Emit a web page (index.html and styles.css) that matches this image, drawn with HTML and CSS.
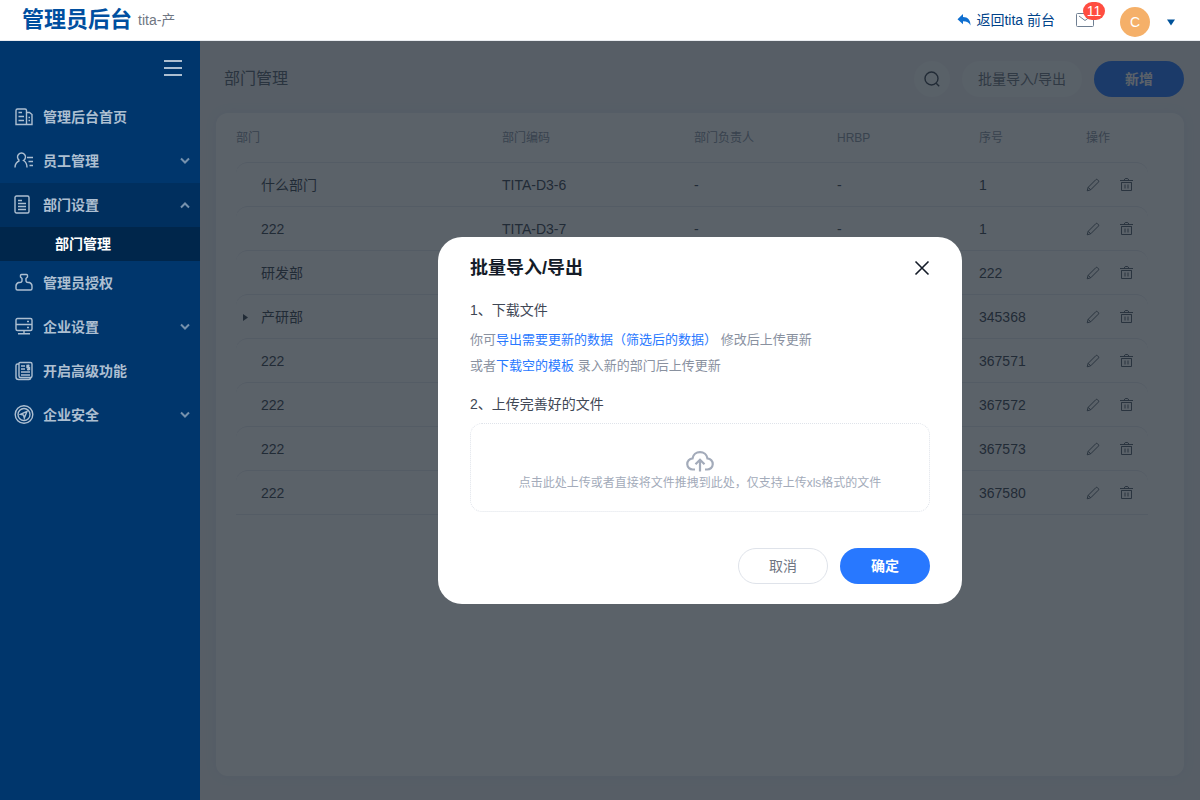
FILE: index.html
```html
<!DOCTYPE html>
<html lang="zh-CN">
<head>
<meta charset="utf-8">
<title>管理员后台</title>
<link rel="stylesheet" href="styles.css">
</head>
<body>
<svg class="sprite" aria-hidden="true">
  <symbol id="pencil" viewBox="0 0 14 14"><path d="M1.2 12.8l1-3.5 7.6-7.6a1.2 1.2 0 0 1 1.7 0l.8.8a1.2 1.2 0 0 1 0 1.7l-7.6 7.6zM2.2 9.3l2.5 2.5"/></symbol>
  <symbol id="trash" viewBox="0 0 14 14"><path d="M0 2.500h13M4 2.300l1.300-1.800h2.400L9 2.300M1.500 4.500v8h10v-8zM1.500 4.500h10M5 6.500v4M8 6.500v4"/></symbol>
  <symbol id="chevron" viewBox="0 0 10 8"><path d="M1 1.500L5 5.500 9 1.500"/></symbol>
</svg>
<header class="topbar">
  <h1 class="brand">管理员后台</h1>
  <span class="tenant">tita-产</span>
  <a class="back" href="#"><svg width="14" height="12" viewBox="0 0 14 12"><path d="M6 0v3c5 0 7.500 3 7.500 8.500C12 8.500 10 7.300 6 7.300v3L.500 5.200z"/></svg>返回tita 前台</a>
  <button class="mail" type="button" aria-label="消息"><svg width="20" height="16" viewBox="0 0 20 16"><rect x="1.500" y="1.500" width="17" height="13" rx="1"/><path d="M4 4l6 4.500L16 4"/></svg><span class="badge">11</span></button>
  <span class="avatar">C</span>
  <button class="caret" type="button" aria-label="账户菜单"><svg width="8" height="7" viewBox="0 0 8 7"><path d="M0 .500h8L4 6.500z"/></svg></button>
</header>
<div class="body">
  <nav class="side">
    <button class="toggle" type="button" aria-label="收起菜单"><svg width="18" height="18" viewBox="0 0 18 18"><path d="M0 2h18M0 9h18M0 16h18"/></svg></button>
    <a class="item" href="#"><svg class="ico" viewBox="0 0 20 20"><path d="M12.500 17.500H2V3.500q0-1.500 1.500-1.500h7.500q1.500 0 1.500 1.500zM12.500 5.500h3l2.500 2v10h-5.500M4.500 5.500h3.500M4.500 9.500h5.500M4.500 13.500h5.500M14.500 10.500h1.500M14.500 13.500h1.500M1.500 17.500h17"/></svg><span>管理后台首页</span></a>
    <a class="item" href="#"><svg class="ico" viewBox="0 0 20 20"><path d="M5.500 9.500a4 4 0 1 1 4 0C12 10.800 13 13.500 13 16.500M5.500 9.500C2.500 11 1 13.500 1 16.500M13 6.500h6M14.500 10.500H19M15.500 14.500H19"/></svg><span>员工管理</span><svg class="arrow"><use href="#chevron"/></svg></a>
    <a class="item open" href="#"><svg class="ico" viewBox="0 0 20 20"><rect x="1" y="1" width="14" height="17" rx="1.500"/><path d="M4 5.500h4M4 8.500h8M4 11.500h8M4 14.500h8"/></svg><span>部门设置</span><svg class="arrow up"><use href="#chevron"/></svg></a>
    <a class="sub" href="#" aria-current="page">部门管理</a>
    <a class="item" href="#"><svg class="ico" viewBox="0 0 20 20"><path d="M8 5.500L6.500 4V2.500q0-1 1-1h5q1 0 1 1V4L12 5.500V8q.300 1.500 2 1.500h1.500q2.500 1 2.500 3.500v2.500q0 1.500-1.500 1.500h-13Q2 17 2 15.500V13q0-2.500 2.500-3.500H6Q7.700 9.500 8 8z"/></svg><span>管理员授权</span></a>
    <a class="item" href="#"><svg class="ico" viewBox="0 0 20 20"><rect x="2" y="1.500" width="16" height="12" rx="1.500"/><path d="M2 7.500h16M10 13.500v3M4 16.700h12M13 4.500h2M13 10.500h2"/></svg><span>企业设置</span><svg class="arrow"><use href="#chevron"/></svg></a>
    <a class="item" href="#"><svg class="ico" viewBox="0 0 20 20"><path d="M6 1.500h10.500q1.500 0 1.500 1.500v12q0 1.500-1.500 1.500H6.500Q5 16.500 5 15V2.500q0-1 1-1zM5 3H3.500Q2 3 2 4.500V16q0 2.500 2.500 2.500h10.500q1.500 0 2-2M7 5h4M7 8h4M7 11h9M7 14h9M15.500 4.500h-2.500v2h2.500v2H13M14.300 3.500v6"/></svg><span>开启高级功能</span></a>
    <a class="item" href="#"><svg class="ico" viewBox="0 0 20 20"><circle cx="10" cy="9.500" r="8.800"/><circle cx="10" cy="9.500" r="6"/><path d="M13 6.300l-6.500 3 3 .800.800 3z"/></svg><span>企业安全</span><svg class="arrow"><use href="#chevron"/></svg></a>
  </nav>
  <main class="main">
    <div class="tools">
      <h2>部门管理</h2>
      <button class="search" type="button" aria-label="搜索"><svg width="18" height="18" viewBox="0 0 18 18"><circle cx="8.500" cy="8.500" r="6.500"/><path d="M13.200 13.200l3 3"/></svg></button>
      <button class="batch" type="button">批量导入/导出</button>
      <button class="add" type="button">新增</button>
    </div>
    <section class="card">
      <table>
        <colgroup><col class="c1"><col class="c2"><col class="c3"><col class="c4"><col class="c5"><col class="c6"></colgroup>
        <thead><tr><th>部门</th><th>部门编码</th><th>部门负责人</th><th>HRBP</th><th>序号</th><th>操作</th></tr></thead>
        <tbody id="rows"></tbody>
      </table>
    </section>
    <div class="mask">
      <div class="dialog" role="dialog" aria-modal="true" aria-labelledby="dialog-title">
        <div class="dialog-head"><h2 id="dialog-title">批量导入/导出</h2><button class="close" type="button" aria-label="关闭"><svg width="16" height="16" viewBox="0 0 16 16"><path d="M1.500 1.500l13 13M14.500 1.500l-13 13"/></svg></button></div>
        <h3>1、下载文件</h3>
        <p>你可<a href="#">导出需要更新的数据（筛选后的数据）</a> 修改后上传更新</p>
        <p>或者<a href="#">下载空的模板</a> 录入新的部门后上传更新</p>
        <h3 class="second">2、上传完善好的文件</h3>
        <button class="drop" type="button"><svg width="28" height="24" viewBox="0 0 28 24"><path d="M9 20.500H7A5.500 5.500 0 0 1 6.500 9.500a7.600 7.600 0 0 1 15 0A5.500 5.500 0 0 1 21 20.500h-2M14 22.500V11M9.500 15.200L14 10.800l4.500 4.400"/></svg><span>点击此处上传或者直接将文件推拽到此处，仅支持上传xls格式的文件</span></button>
        <div class="actions"><button class="cancel" type="button">取消</button><button class="ok" type="button">确定</button></div>
      </div>
    </div>
  </main>
</div>
<script src="rows.js"></script>
</body>
</html>
```
FILE: styles.css
```css
* { box-sizing: border-box; }
body {
  margin: 0;
  min-height: 100vh;
  display: flex;
  flex-direction: column;
  font: 14px/20px "Liberation Sans", "Noto Sans CJK SC", sans-serif;
  color: #3f4755;
}
h1, h2, h3, p { margin: 0; font-weight: 400; }
a { text-decoration: none; color: inherit; }
button { font: inherit; border: 0; padding: 0; background: none; color: inherit; cursor: pointer; }
svg { fill: none; stroke: currentColor; display: block; flex: none; }
.sprite { position: absolute; width: 0; height: 0; }

.topbar {
  display: flex;
  align-items: center;
  height: 41px;
  padding: 0 25px 0 22px;
  background: #fff;
  border-bottom: 1px solid #e9ecf0;
}
.brand { font-size: 22px; line-height: 40px; font-weight: 700; color: #004fa0; }
.tenant { margin-left: 6px; color: #6f7682; }
.back { margin-left: auto; display: flex; align-items: center; gap: 5px; color: #00438a; }
.back svg { fill: #0f6fd0; stroke: none; }
.mail { position: relative; margin-left: 20px; color: #6f7f92; }
.badge {
  position: absolute;
  left: 8px;
  top: -10px;
  width: 22px;
  height: 18px;
  border-radius: 9px;
  background: #ff4d40;
  color: #fff;
  line-height: 18px;
  text-align: center;
}
.avatar {
  width: 30px;
  height: 30px;
  margin: 3px 0 0 25px;
  border-radius: 50%;
  background: #f5b069;
  color: #fff;
  line-height: 30px;
  text-align: center;
}
.caret { margin: 4px 0 0 17px; }
.caret svg { fill: #005299; stroke: none; }

.body { flex: 1; display: flex; }
.side { width: 200px; flex: none; background: #00366c; color: #adbfd1; font-weight: 600; }
.toggle { display: block; margin: 18px 18px 18px auto; }
.toggle svg { stroke-width: 2; }
.item { display: flex; align-items: center; gap: 9px; height: 44px; padding: 0 10px 0 14px; }
.item.open { background: #002f5e; }
.ico { width: 20px; height: 20px; stroke-width: 1.4; }
.arrow { width: 10px; height: 8px; margin-left: auto; stroke-width: 2; color: #7591ad; }
.arrow.up { transform: rotate(180deg); }
.sub { display: block; padding-left: 55px; line-height: 34px; background: #00264b; color: #fff; }

.main { position: relative; flex: 1; min-width: 0; padding: 20px 16px 24px; display: flex; flex-direction: column; background: #f0f2f5; }
.tools { display: flex; align-items: center; gap: 12px; padding-left: 8px; }
.tools h2 { margin-right: auto; font-size: 16px; color: #5a6472; }
.tools button { height: 36px; border-radius: 18px; background: #f9fafb; }
.tools .search { width: 36px; display: grid; place-items: center; }
.search svg { stroke-width: 1.4; }
.tools .batch { width: 120px; color: #6f7682; }
.tools .add { width: 90px; background: #2878ff; color: #fff; font-weight: 600; }
.card { flex: 1; margin-top: 16px; padding: 0 36px 0 20px; border-radius: 12px; background: #fff; box-shadow: 0 0 12px #e4e8f0; }
table { width: 100%; table-layout: fixed; border-collapse: separate; border-spacing: 0; }
.c1 { width: 266px; } .c2 { width: 192px; } .c3 { width: 143px; }
.c4 { width: 142px; } .c5 { width: 107px; } .c6 { width: 62px; }
th, td { padding: 0; text-align: left; }
th { height: 49px; font-size: 12px; font-weight: 400; color: #8c96a6; }
td { height: 44px; border-top: 1px solid #e6e9f0; }
td:first-child { border-top-left-radius: 12px; }
td:last-child { border-top-right-radius: 12px; }
tr:last-child td { height: 45px; border-bottom: 1px solid #e6e9f0; }
.name { display: flex; align-items: center; padding-left: 6px; }
.fold { width: 19px; }
.fold svg { fill: #3f4755; stroke: none; }
.ops { display: flex; gap: 20px; color: #5a6472; }
.ops svg { width: 14px; height: 14px; }

.mask { position: absolute; inset: 0; display: grid; place-items: center; background: rgba(21, 32, 42, .7); }
.dialog { width: 524px; padding: 20px 32px; border-radius: 24px; background: #fff; }
.dialog-head { display: flex; align-items: center; justify-content: space-between; color: #141c28; }
.dialog-head h2 { font-size: 18px; line-height: 22px; font-weight: 600; }
.close svg { stroke-width: 1.6; }
.dialog h3 { margin: 21px 0 7px; font-size: 14px; line-height: 20px; }
.dialog h3.second { margin: 15px 0 9px; }
.dialog p { font-size: 13px; line-height: 26px; color: #89919f; }
.dialog p a { color: #2878ff; }
.drop {
  width: 100%;
  height: 89px;
  display: flex;
  flex-direction: column;
  align-items: center;
  justify-content: center;
  padding-top: 6px;
  border: 1px dotted #dfe3ea;
  border-radius: 12px;
  color: #a3abba;
  font-size: 12px;
}
.drop svg { stroke-width: 2.2; }
.actions { display: flex; justify-content: flex-end; gap: 12px; margin-top: 36px; }
.actions button { width: 90px; height: 36px; border-radius: 18px; }
.actions .cancel { border: 1px solid #dfe3ea; color: #6f7682; }
.actions .ok { background: #2878ff; color: #fff; font-weight: 600; }
```
FILE: rows.js
```js
const rows = [
  { name: "什么部门", code: "TITA-D3-6", owner: "-", hrbp: "-", order: 1 },
  { name: "222", code: "TITA-D3-7", owner: "-", hrbp: "-", order: 1 },
  { name: "研发部", order: 222 },
  { name: "产研部", order: 345368, parent: true },
  { name: "222", order: 367571 },
  { name: "222", order: 367572 },
  { name: "222", order: 367573 },
  { name: "222", order: 367580 }
];
const fold = '<svg width="6" height="8" viewBox="0 0 6 8"><path d="M1 1l5 3.500L1 8z"/></svg>';
document.getElementById("rows").innerHTML = rows.map(({ name, code = "", owner = "", hrbp = "", order, parent }) => `
  <tr>
    <td><div class="name"><span class="fold">${parent ? fold : ""}</span>${name}</div></td>
    <td>${code}</td><td>${owner}</td><td>${hrbp}</td><td>${order}</td>
    <td><div class="ops">
      <button type="button" aria-label="编辑"><svg><use href="#pencil"/></svg></button>
      <button type="button" aria-label="删除"><svg><use href="#trash"/></svg></button>
    </div></td>
  </tr>`).join("");
```
